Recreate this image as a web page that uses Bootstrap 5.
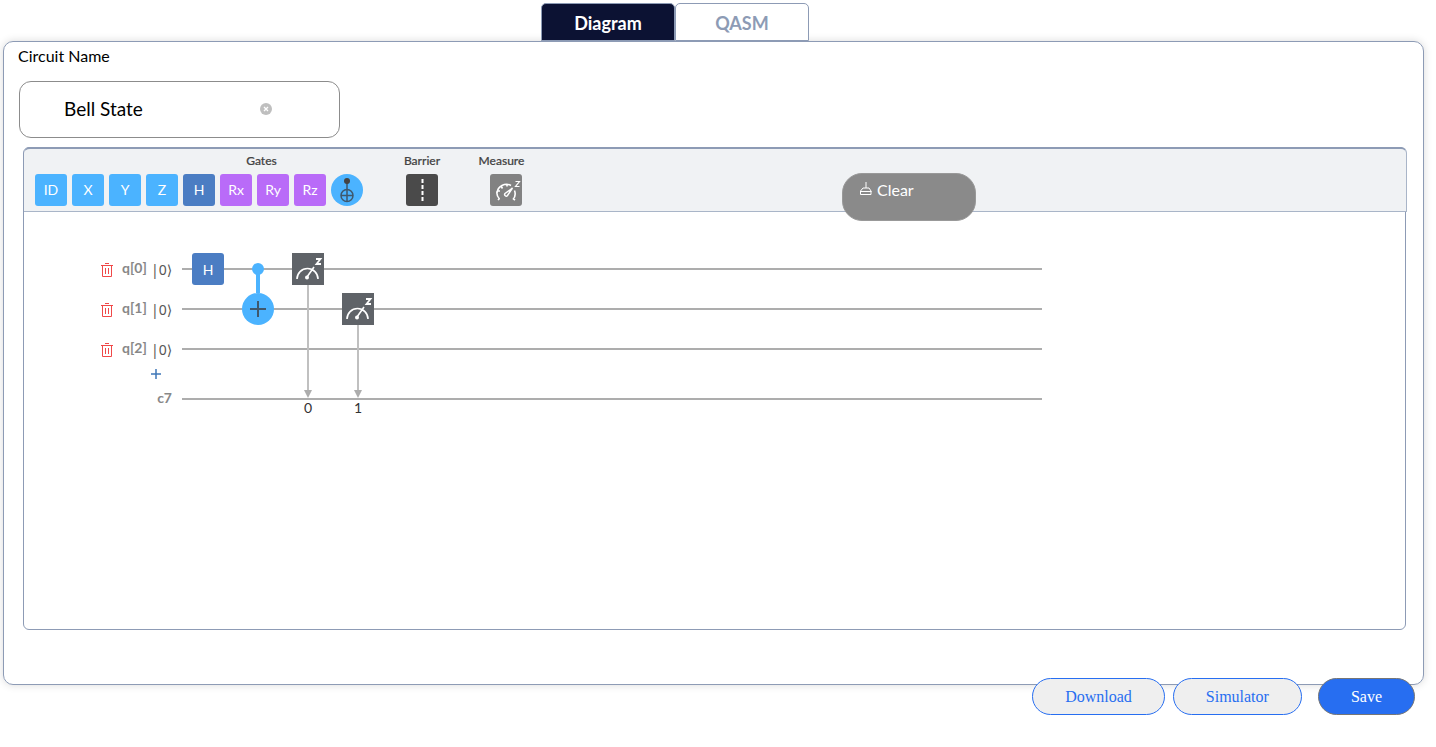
<!DOCTYPE html>
<html lang="en">
<head>
<meta charset="utf-8">
<meta name="viewport" content="width=device-width, initial-scale=1">
<title>Circuit editor</title>
<link rel="stylesheet" href="https://cdn.jsdelivr.net/npm/bootstrap@5.3.0/dist/css/bootstrap.min.css">
<style>
  body { font-family: Lato, sans-serif; font-size: 16px; color: #000; }
  .view-tabs { padding: 3px 86px 0 0; }
  .view-tabs .nav-link { width: 134px; height: 38px; padding: 0; border: 1px solid #8d9bb5; border-radius: 5px 5px 0 0; font-size: 18px; line-height: 38px; font-weight: 700; text-align: center; color: #8d9bb5; background: #fff; }
  .view-tabs .nav-link.active { color: #fff; background: #0c1233; border-bottom-color: #8d9bb5; }
  .panel { margin: 0 12px 0 3px; padding: 2px 17px 54px 14px; border: 1px solid #8d9bb5; border-radius: 10px; box-shadow: 0 0 8px rgba(0,0,0,.15); }
  .name-field { width: 321px; height: 57px; margin: 13px 0 9px 1px; padding: 0 66px 0 44px; border: 1px solid #8c8c8c; border-radius: 12px; }
  .name-field input { min-width: 0; height: 53px; margin-bottom: 2px; border: 0; outline: 0; padding: 0; font-size: 19px; color: #000; background: none; }
  .name-field .bare-btn { margin-bottom: 2px; }
  .bare-btn { display: flex; border: 0; padding: 0; background: none; }
  .editor { min-height: 483px; margin-left: 5px; border: 1px solid #8d9bb5; border-radius: 6px; }
  .tools { height: 65px; margin: -1px -2px 0 0; padding: 0 0 0 11px; background: #f0f2f4; border: 1px solid #a9b5c8; border-top: 2px solid #8d9bb5; border-left: 0; border-radius: 6px 6px 0 0; }
  .tool-label { font-size: 12px; line-height: 14px; color: #444; font-weight: 500; padding-top: 5px; -webkit-text-stroke: .2px #444; }
  .gates-label { padding-left: 125px; }
  .tile { width: 32px; height: 32px; padding: 0; border: 0; border-radius: 3px; color: #fff; font-size: 14px; line-height: 32px; background: #4bb3ff; display: block; }
  .tile.hadamard { background: #4b7dc3; }
  .tile.rot { background: #b96bf8; }
  .tile.barrier { background: #4a4a4a; }
  .tile.meter { background: #828282; }
  .tile svg { display: block; }
  .tile-row { gap: 5px; margin-top: 6px; }
  .barrier-tool { width: 38px; margin-left: 40px; }
  .measure-tool { width: 47px; margin-left: 37px; }
  .measure-tool .tile { margin-left: 9px; }
  .clear-btn { width: 134px; height: 48px; margin: 24px 0 0 317px; padding: 6px 0 0 17px; border: 1px solid #999; border-radius: 20px; background: #8a8a8a; color: #fff; line-height: 20px; gap: 5px; }
  .circuit { padding: 36px 0 0 77px; }
  .register { width: 81px; font-size: 14px; font-weight: 700; color: #888; }
  .qubit { height: 40px; }
  .qubit .bare-btn { margin-top: 4px; }
  .qubit-name { margin: 0 0 2px 9px; width: 29px; }
  .ket { margin-top: 2px; font-family: "Noto Sans", "DejaVu Sans", sans-serif; font-size: 14px; font-weight: 400; color: #555; }
  .add-row { height: 16px; padding-left: 50px; }
  .creg { height: 27px; padding-right: 10px; }
  .wires { flex: 0 1 860px; min-width: 0; }
  .wires text { font-family: Lato, sans-serif; font-size: 14px; text-anchor: middle; }
  .actions { margin: -7px 21px 0 0; }
  .pill { height: 37px; border: 1px solid #276ef1; border-radius: 19px; padding: 0 32px; font-family: "Liberation Serif", serif; font-size: 16px; line-height: 35px; color: #276ef1; background: #efefef; }
  .pill.save { background: #276ef1; color: #fff; border-color: #767676; margin-left: 8px; }
</style>
</head>
<body>
<nav class="nav view-tabs justify-content-center">
  <a class="nav-link active" href="#diagram">Diagram</a>
  <a class="nav-link" href="#qasm">QASM</a>
</nav>

<main class="panel" id="diagram">
  <label for="circuit-name" class="d-block">Circuit Name</label>
  <div class="name-field d-flex align-items-center">
    <input id="circuit-name" type="text" value="Bell State" class="flex-grow-1">
    <button class="bare-btn" type="button" aria-label="Clear name">
      <svg width="14" height="14" viewBox="0 0 14 14"><circle cx="7" cy="7" r="6" fill="#bfbfbf"/><path d="M5 5l4 4M9 5l-4 4" stroke="#fff" stroke-width="1.3"/></svg>
    </button>
  </div>

  <section class="editor">
    <div class="tools d-flex align-items-start">
      <div>
        <div class="tool-label gates-label text-center">Gates</div>
        <div class="tile-row d-flex">
          <button class="tile" type="button">ID</button>
          <button class="tile" type="button">X</button>
          <button class="tile" type="button">Y</button>
          <button class="tile" type="button">Z</button>
          <button class="tile hadamard" type="button">H</button>
          <button class="tile rot" type="button">Rx</button>
          <button class="tile rot" type="button">Ry</button>
          <button class="tile rot" type="button">Rz</button>
          <button class="tile rounded-circle" type="button" aria-label="CNOT">
            <svg width="32" height="32" fill="none" stroke="#3f586d" stroke-width="1.5"><path d="M16 7v21M10 21.500h12" /><circle cx="16" cy="21.500" r="6"/><circle cx="16" cy="7" r="3" fill="#444" stroke="none"/></svg>
          </button>
        </div>
      </div>
      <div class="barrier-tool">
        <div class="tool-label text-center">Barrier</div>
        <div class="tile-row d-flex justify-content-center">
          <button class="tile barrier" type="button" aria-label="Barrier"><svg width="32" height="32"><path d="M16.500 5v23" stroke="#fff" stroke-width="2" stroke-dasharray="4 2"/></svg></button>
        </div>
      </div>
      <div class="measure-tool">
        <div class="tool-label text-center">Measure</div>
        <div class="tile-row d-flex justify-content-center">
          <button class="tile meter" type="button" aria-label="Measure">
            <svg width="32" height="32" fill="none" stroke="#fff" stroke-width="1.600"><path d="M9.500 24.500L8 26M9.500 25A8.500 8.500 0 0 1 7 17.500M7 19A9.500 9.500 0 0 1 21 11.500M24.500 16.500A9 9 0 0 1 23 25.500M7 17h3M11 12l1.500 2.500M17 10v2.500M23 24.500l2 1.500"/><path d="M22.500 14L15 19.500a1.600 1.600 0 0 0 2.500 2z" stroke-width="1.400"/><path d="M25.500 7.500h4l-4 5h4" stroke-width="1.200"/></svg>
          </button>
        </div>
      </div>
      <button class="clear-btn d-flex" type="button">
        <svg width="12" height="16" viewBox="0 0 12 16" fill="none" stroke="#fff" stroke-width="1"><path d="M6 2v6M3 8h6l2 3v3.500H.5V11zM.5 11.500h11"/></svg>
        <span>Clear</span>
      </button>
    </div>

    <div class="circuit d-flex align-items-start">
      <div class="register">
        <div class="qubit d-flex align-items-center">
          <button class="bare-btn" type="button" aria-label="Delete q[0]"><svg width="12" height="14" fill="none" stroke="#f04848"><path d="M0 2.500h12M4 .5h4M1.500 2.500v11h9v-11M4.500 5v6M7.500 5v6"/></svg></button>
          <span class="qubit-name">q[0]</span><span class="ket">|0⟩</span>
        </div>
        <div class="qubit d-flex align-items-center">
          <button class="bare-btn" type="button" aria-label="Delete q[1]"><svg width="12" height="14" fill="none" stroke="#f04848"><path d="M0 2.500h12M4 .5h4M1.500 2.500v11h9v-11M4.500 5v6M7.500 5v6"/></svg></button>
          <span class="qubit-name">q[1]</span><span class="ket">|0⟩</span>
        </div>
        <div class="qubit d-flex align-items-center">
          <button class="bare-btn" type="button" aria-label="Delete q[2]"><svg width="12" height="14" fill="none" stroke="#f04848"><path d="M0 2.500h12M4 .5h4M1.500 2.500v11h9v-11M4.500 5v6M7.500 5v6"/></svg></button>
          <span class="qubit-name">q[2]</span><span class="ket">|0⟩</span>
        </div>
        <div class="add-row"><button class="bare-btn" type="button" aria-label="Add qubit"><svg width="10" height="12" stroke="#3f77b8" stroke-width="1.500"><path d="M0 6h10M5 1v10"/></svg></button></div>
        <div class="creg d-flex align-items-center justify-content-end">c7</div>
      </div>
      <svg class="wires" width="860" height="170" viewBox="0 0 860 170">
        <g stroke="#adadad" stroke-width="2"><path d="M0 21h860M0 61h860M0 101h860M0 151h860"/></g>
        <g stroke="#c0c0c0" stroke-width="2"><path d="M126 37v108M176 77v68"/></g>
        <path d="M122 142h8l-4 8zM172 142h8l-4 8z" fill="#adadad"/>
        <rect x="10" y="5" width="32" height="32" rx="3" fill="#4b7dc3"/><text x="26" y="27" fill="#fff">H</text>
        <g fill="#4bb3ff"><circle cx="76" cy="21" r="6"/><path d="M74 21h4v24h-4z"/><circle cx="76" cy="61" r="16"/></g>
        <path d="M68 61h16M76 53v16" stroke="#3f586d" stroke-width="2"/>
        <g id="meter-node">
          <path d="M110 5h32v32h-32z" fill="#5f6368"/>
          <path d="M115 31a10.500 10.500 0 0 1 21 0M125 29l7-10" fill="none" stroke="#fff" stroke-width="1.600"/><circle cx="125" cy="29.500" r="2" fill="#fff"/>
          <path d="M134 11h4.500l-4 5h4.500" fill="none" stroke="#fff" stroke-width="1.800"/>
        </g>
        <use href="#meter-node" x="50" y="40"/>
        <text x="126" y="165" fill="#333">0</text><text x="176" y="165" fill="#333">1</text>
      </svg>
    </div>
  </section>
</main>

<div class="actions d-flex justify-content-end position-relative gap-2">
  <button class="pill" type="button">Download</button>
  <button class="pill" type="button">Simulator</button>
  <button class="pill save" type="button">Save</button>
</div>
<script src="https://cdn.jsdelivr.net/npm/bootstrap@5.3.0/dist/js/bootstrap.bundle.min.js"></script>
</body>
</html>
